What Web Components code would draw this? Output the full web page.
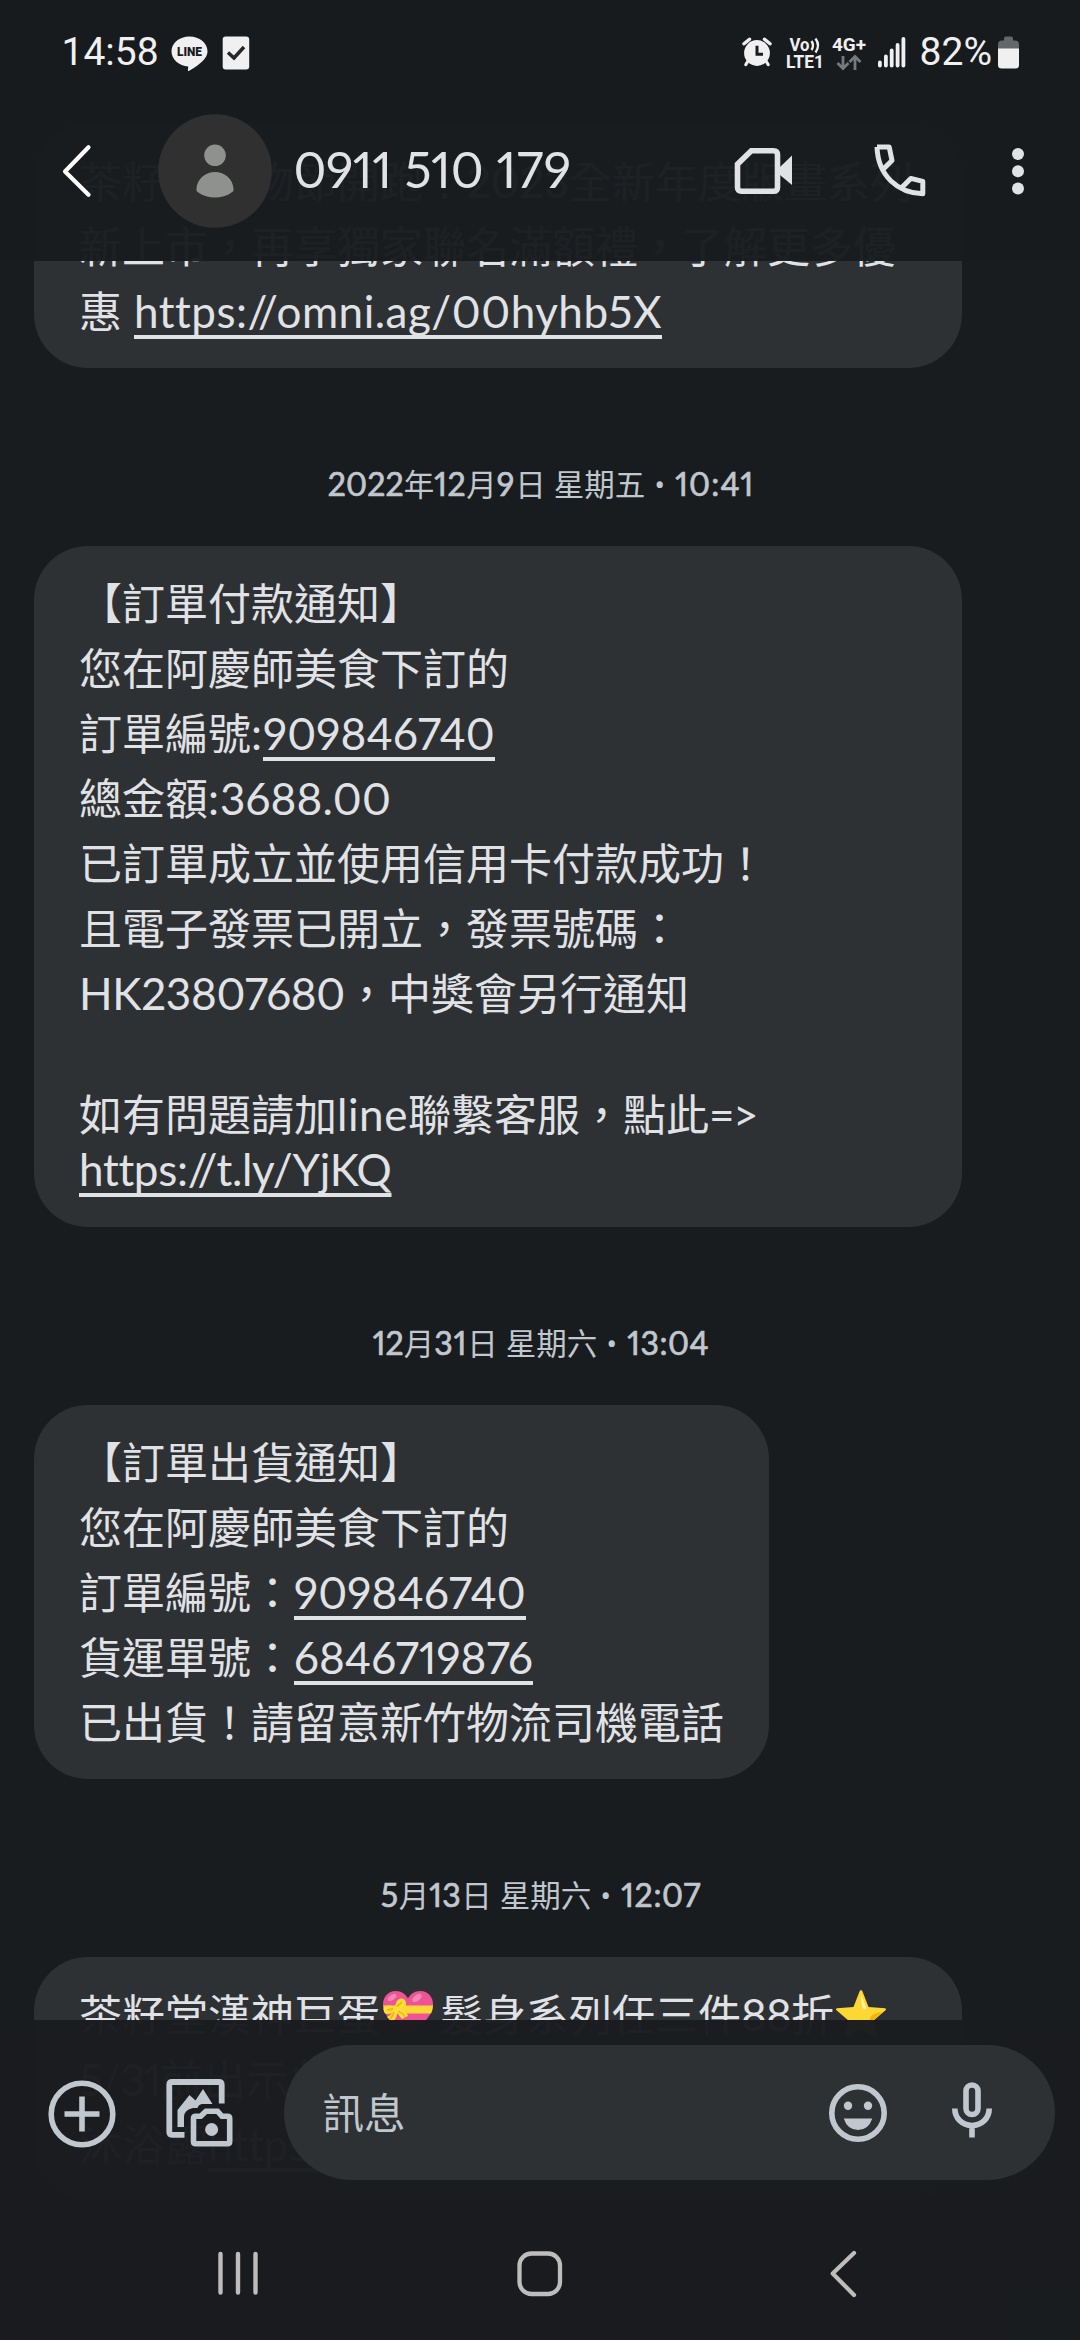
<!DOCTYPE html>
<html lang="zh-Hant">
<head>
<meta charset="utf-8">
<title>0911 510 179</title>
<style>
html,body{margin:0;padding:0;background:#191c1f}
body{width:1080px;height:2340px;overflow:hidden}
</style>
</head>
<body>
<sms-screen>
  <sms-thread slot="thread">
    <sms-bubble>
      <sms-line>茶籽堂購物節開跑！<sms-run w="103">2023</sms-run>全新年度版畫系列</sms-line>
      <sms-line>新上市，再享獨家聯名滿額禮，了解更多優</sms-line>
      <sms-line>惠<sms-gap w="12"></sms-gap><sms-run w="528" link>https://omni.ag/00hyhb5X</sms-run></sms-line>
    </sms-bubble>
    <sms-date><sms-run w="76">2022</sms-run>年<sms-run w="32">12</sms-run>月<sms-run w="18.5">9</sms-run>日<sms-gap w="8"></sms-gap>星期五<sms-gap w="9"></sms-gap><sms-dot></sms-dot><sms-gap w="10"></sms-gap><sms-run w="79">10:41</sms-run></sms-date>
    <sms-bubble>
      <sms-line>【訂單付款通知】</sms-line>
      <sms-line>您在阿慶師美食下訂的</sms-line>
      <sms-line>訂單編號<sms-run w="12">:</sms-run><sms-run w="232" link>909846740</sms-run></sms-line>
      <sms-line>總金額<sms-run w="12">:</sms-run><sms-run w="171">3688.00</sms-run></sms-line>
      <sms-line>已訂單成立並使用信用卡付款成功！</sms-line>
      <sms-line>且電子發票已開立，發票號碼：</sms-line>
      <sms-line><sms-run w="266">HK23807680</sms-run>，中獎會另行通知</sms-line>
      <sms-line latin></sms-line>
      <sms-line>如有問題請加<sms-run w="71">line</sms-run>聯繫客服，點此<sms-run w="48">=&gt;</sms-run></sms-line>
      <sms-line latin><sms-run w="312.5" link>https://t.ly/YjKQ</sms-run></sms-line>
    </sms-bubble>
    <sms-date><sms-run w="31">12</sms-run>月<sms-run w="33">31</sms-run>日<sms-gap w="8"></sms-gap>星期六<sms-gap w="9"></sms-gap><sms-dot></sms-dot><sms-gap w="10"></sms-gap><sms-run w="82">13:04</sms-run></sms-date>
    <sms-bubble compact>
      <sms-line>【訂單出貨通知】</sms-line>
      <sms-line>您在阿慶師美食下訂的</sms-line>
      <sms-line>訂單編號：<sms-run w="232" link>909846740</sms-run></sms-line>
      <sms-line>貨運單號：<sms-run w="239" link>6846719876</sms-run></sms-line>
      <sms-line>已出貨！請留意新竹物流司機電話</sms-line>
    </sms-bubble>
    <sms-date><sms-run w="18">5</sms-run>月<sms-run w="32">13</sms-run>日<sms-gap w="8"></sms-gap>星期六<sms-gap w="9"></sms-gap><sms-dot></sms-dot><sms-gap w="10"></sms-gap><sms-run w="80">12:07</sms-run></sms-date>
    <sms-bubble>
      <sms-line>茶籽堂漢神巨蛋<sms-icon name="heart"></sms-icon>髮身系列任三件<sms-run w="50">88</sms-run>折<sms-icon name="star"></sms-icon></sms-line>
      <sms-line><sms-run w="81">5/31</sms-run>前出示此</sms-line>
      <sms-line>沐浴露<sms-run w="140" link>https://</sms-run></sms-line>
    </sms-bubble>
  </sms-thread>
  <sms-header slot="header"></sms-header>
  <sms-composer slot="footer"></sms-composer>
</sms-screen>

<script>
const ICONS = {
  line: [37, 36, '<path d="M18.5.5C28.500.500 36.500 7 36.500 15.300c0 4.600-3.500 9.200-8.500 13-3.500 2.700-7 5-10.200 6.600-.8.3-1-.1-.9-.8l.4-3.500C8 30 .5 23.500.5 15.300.5 7 8.500.5 18.500.5z" fill="#f0f0f0"/><text x="18.500" y="20" text-anchor="middle" font-family="Roboto" font-weight="900" font-size="12" textLength="25" lengthAdjust="spacingAndGlyphs" fill="#191c1f">LINE</text>'],
  task: [28, 34, '<rect x=".7" y=".5" width="26.500" height="33" rx="3" fill="#f0f0f0"/><path d="M6 16.500l6 5.500 10-11" fill="none" stroke="#25282b" stroke-width="3.500"/>'],
  alarm: [30, 30, '<g fill="none" stroke="#f0f0f0" stroke-linecap="round"><path d="M2 6.800l5.500-4.600M28 6.800l-5.500-4.600" stroke-width="3.400"/><path d="M6 24l-2.200 3.600M24 24l2.200 3.600" stroke-width="3"/></g><circle cx="15" cy="16" r="12.900" fill="#f0f0f0"/><path d="M15 8.800v8.400h6" fill="none" stroke="#191c1f" stroke-width="3"/>'],
  volte: [40, 34, '<g fill="#f0f0f0" font-family="Roboto" font-weight="700" font-size="18"><text x="3.500" y="15" textLength="20" lengthAdjust="spacingAndGlyphs">Vo</text><text x="0" y="32" textLength="38" lengthAdjust="spacingAndGlyphs">LTE1</text></g><path d="M25.500 5q3 4.500 0 9M29.500 2.500q5 7 0 14" fill="none" stroke="#f0f0f0" stroke-width="2.400"/>'],
  data: [34, 34, '<text x="0" y="15" fill="#f0f0f0" font-family="Roboto" font-weight="700" font-size="18" textLength="34" lengthAdjust="spacingAndGlyphs">4G+</text><path d="M11 20v12M5.500 27l5.500 5.500 5.500-5.500M23 34V21M17.500 26l5.500-5.500 5.500 5.500" fill="none" stroke="#77797b" stroke-width="2.800"/>'],
  signal: [28, 31, '<g fill="#f0f0f0"><rect x="0" y="23.500" width="3.800" height="7" rx="1.900"/><rect x="6" y="17.500" width="3.800" height="13" rx="1.900"/><rect x="11.800" y="11.500" width="3.800" height="19" rx="1.900"/><rect x="17.700" y="6" width="3.800" height="24.500" rx="1.900"/><rect x="23.500" y="0" width="3.800" height="30.500" rx="1.900"/></g>'],
  battery: [22, 33, '<path d="M6 4.500V2.500Q6 .5 8 .5h5q2 0 2 2v2h2q4 0 4 4V13H0V8.500q0-4 4-4z" fill="#646668"/><path d="M0 12.500h21V29q0 3.500-3.500 3.500h-14Q0 32.500 0 29z" fill="#f0f0f0"/>'],
  back: [30, 56, '<path d="M26.500 4.300L3 28.500 26.500 51.700" fill="none" stroke="#fff" stroke-width="4.200" stroke-linecap="round" stroke-linejoin="round"/>'],
  avatar: [114, 114, '<circle cx="57" cy="57" r="56.800" fill="#303030"/><circle cx="57" cy="41.300" r="10.800" fill="#8f918f"/><path d="M38.400 75.500C38.800 65 47.500 58 57 58s18.200 7 18.600 17.500q.1 2-1.700 2.700C69 82 63 83.500 57 83.500s-12-1.500-17-5.300q-1.700-.7-1.600-2.700z" fill="#8f918f"/>'],
  video: [58, 48, '<path d="M16.300 3.700H38.500q4 0 4 4V40.300q0 4-4 4H6.500q-4 0-4-4V17.200z" fill="none" stroke="#e1e2e5" stroke-width="5.600"/><path d="M57 8.500V38L45 28V20z" fill="#e1e2e5"/>'],
  call: [52, 53, '<g fill="none" stroke="#e1e2e5" stroke-width="5" stroke-linejoin="round"><path d="M3 3H15.200L18 16.500 9.200 25.200M3 3C4 32 24 49 48.800 49.800V37.400L36.800 34.400 27.800 43.500" /></g>'],
  more: [14, 48, '<g fill="#e1e2e5"><circle cx="7" cy="7" r="6"/><circle cx="7" cy="24.200" r="6"/><circle cx="7" cy="41.400" r="6"/></g>'],
  plus: [68, 68, '<g fill="none" stroke="#c1c7ce" stroke-width="5.600"><circle cx="34" cy="34" r="30.800"/><path d="M34 16.500v35M16.500 34h35"/></g>'],
  gallery: [70, 70, '<path d="M18.500 55.800H6q-2.700 0-2.700-2.700V5.800Q3.300 3 6 3H53q2.700 0 2.700 2.800V24.500" fill="none" stroke="#c1c7ce" stroke-width="5.800"/><path d="M11.500 48V31L23.500 16 29.500 21.500 37 10 46.500 25H36Q32.500 25.500 31.500 29H27Q18 31 18 38V48z" fill="#c1c7ce"/><path d="M27.500 39.500Q27.500 37.300 29.700 37.300h5L40 32.200H51.500L56 37.300H61.500q2.200 0 2.200 2.200V62.500q0 2.200-2.200 2.200H29.700q-2.200 0-2.200-2.200z" fill="none" stroke="#c1c7ce" stroke-width="5.600"/><circle cx="45.600" cy="50.500" r="6.500" fill="#c1c7ce"/>'],
  smile: [58, 58, '<circle cx="29" cy="29" r="26.200" fill="none" stroke="#c1c7ce" stroke-width="5.600"/><g fill="#c1c7ce"><circle cx="19" cy="21.700" r="4.200"/><circle cx="39" cy="21.700" r="4.200"/><path d="M14.700 34.500H43.300Q39.500 46 29 46T14.700 34.500z"/></g>'],
  mic: [40, 56, '<g fill="none" stroke="#c1c7ce" stroke-width="5.600"><rect x="14" y="3" width="12" height="29.500" rx="6"/><path d="M2.800 26.500c0 9.500 7.200 17 17.200 17s17.200-7.500 17.200-17M20 43v12.500"/></g>'],
  recents: [40, 46, '<path d="M2.500 3v38.500M20 3v38.500M37.500 3v38.500" stroke="#bfbdbc" stroke-width="4.400" stroke-linecap="round"/>'],
  home: [46, 46, '<rect x="2.500" y="2.500" width="40.500" height="40.500" rx="12" fill="none" stroke="#bfbdbc" stroke-width="4.300"/>'],
  navback: [28, 48, '<path d="M24 3L2.700 23.500 24 45" fill="none" stroke="#bfbdbc" stroke-width="4.200" stroke-linecap="round" stroke-linejoin="round"/>'],
  heart: [60, 48, '<path d="M28 46C16 36 3 27 3 14.500 3 6.500 8.500 1 15.500 1 21.500 1 26 4.500 28 8.500 30 4.500 34.500 1 40.500 1 47.500 1 53 6.500 53 14.500 53 27 40 36 28 46z" fill="#ee5396"/><ellipse cx="12" cy="7.500" rx="5" ry="2.500" fill="#f985b8" transform="rotate(-38 12 7.500)"/><ellipse cx="37" cy="8" rx="5.500" ry="3" fill="#f985b8" transform="rotate(-38 37 8)"/><path d="M3.300 15.500H53Q52.800 20 51 23.500H5Q3.500 20 3.300 15.500z" fill="#fdd835"/><path d="M15 17Q16 9 21 8.500 26 8.500 26 14 25.500 19 19 20 27 21 28 26L22 29 17 23Q17 29 12 32L7 27Q11 25 13 22 7 26 4 22 2 16 8 15.500 12 15 15 17z" fill="#ffdf32"/><path d="M17 16.500L22 12M13 19L7 20M18 21.500Q23 23 25 27M14 22Q13 26 10 29" fill="none" stroke="#f9b21d" stroke-width="1.800"/>'],
  star: [52, 48, '<path d="M26 0q1 0 1.500 1.500L33.500 17 50 18.300q1.800.6.500 2L38 31 42 46q.2 2-1.500 1.300L26 39 11.500 47.300Q9.800 48 10 46L14 31 1.500 20.300q-1.300-1.400.5-2L18.500 17 24.500 1.500Q25 0 26 0z" fill="#fdd835"/><path d="M26 4l4.500 12q1.500 4-1.500 3-3-1-3-15z" fill="#fff59d"/><path d="M47 22q-10 1-12 6-1 3 3 2z" fill="#f4b400"/>']
};

function define(name, html, init) {
  const tpl = document.createElement('template');
  tpl.innerHTML = html;
  customElements.define(name, class extends HTMLElement {
    connectedCallback() {
      if (this.shadowRoot) return;
      this.attachShadow({ mode: 'open' }).append(tpl.content.cloneNode(true));
      if (init) init.call(this, this.shadowRoot);
    }
  });
}

define('sms-icon', '<style>:host{display:inline-block;flex:none;line-height:0}svg{display:block;overflow:visible}:host([name=heart]),:host([name=star]){vertical-align:-7px;margin-top:-20px}:host([name=star]){margin-left:1px}</style>', function (root) {
  const [w, h, body] = ICONS[this.getAttribute('name')];
  root.innerHTML += `<svg width="${w}" height="${h}" viewBox="0 0 ${w} ${h}">${body}</svg>`;
});

define('sms-gap', '<style>:host{display:inline-block}</style>', function () {
  this.style.width = this.getAttribute('w') + 'px';
});

define('sms-dot', '<style>:host{display:inline-block;width:11px;line-height:0;font-family:Roboto,sans-serif;font-size:31px}</style>•');

define('sms-screen', `<style>
  :host{display:grid;grid-template:2340px/1080px;background:#191c1f;overflow:hidden;color:#e1e2e5}
  .layer{grid-area:1/1;min-height:0}
  .chrome{display:flex;flex-direction:column;justify-content:space-between}
</style><div class="layer"><slot name="thread"></slot></div><div class="layer chrome"><slot name="header"></slot><slot name="footer"></slot></div>`);

define('sms-thread', `<style>
  :host{display:flex;flex-direction:column;align-items:flex-start;padding:124px 34px 0;height:2100px;overflow:hidden}
</style><slot></slot>`);

define('sms-bubble', `<style>
  :host{display:flex;flex-direction:column;flex:none;box-sizing:border-box;width:928px;padding:23px 45px 26px;border-radius:54px;background:#2d3134}
  :host([compact]){width:735px}
</style><slot></slot>`);

define('sms-line', `<style>
  :host{display:block;height:65px;font:43px/65px "Noto Sans CJK TC",sans-serif;white-space:nowrap;--run-size:44px}
  :host([latin]){height:56px;font:43px/50px "Lato","Noto Sans CJK TC",sans-serif}
</style><slot></slot>`);

define('sms-date', `<style>
  :host{display:block;flex:none;box-sizing:border-box;width:1014px;height:178px;padding-top:93px;text-align:center;font:30.5px/44px "Noto Sans CJK TC",sans-serif;color:#c1c7ce;white-space:nowrap;--run-stroke:.7px;--run-size:32px}
</style><slot></slot>`);

/* A Latin or digit run whose tracking is set so that it takes a given advance width. */
define('sms-run', `<style>
  :host{display:inline-block;line-height:0;font-family:"Lato",sans-serif;font-size:var(--run-size,inherit);font-feature-settings:"pnum";font-variant-ligatures:none;-webkit-text-stroke:var(--run-stroke,0) currentColor;white-space:nowrap}
  :host([link]) span{text-decoration:underline;text-decoration-thickness:4px;text-underline-offset:6.500px;text-decoration-skip-ink:none}
</style><span><slot></slot></span>`, function () {
  const w = +this.getAttribute('w');
  const natural = this.getBoundingClientRect().width;
  this.style.letterSpacing = (w - natural) / this.textContent.length + 'px';
  this.style.width = w + 'px';
});

define('sms-header', `<style>
  :host{display:block;height:261px;background:rgba(25,28,31,.975)}
  .status{display:flex;align-items:flex-start;height:113px;box-sizing:border-box;padding:35.500px 60px 0 61.500px;font:39px/39px Roboto,sans-serif;color:#f0f0f0}
  .status span{margin-top:-3px}
  .grow{flex:1}
  .bar{display:flex;align-items:center;height:115px;padding-left:62px}
  .title{font:50px/60px "Lato",sans-serif;margin:-4px 0 0 22px;width:300px;white-space:nowrap}
</style>
<div class="status">
  <span>14:58</span>
  <sms-icon name="line" style="margin-left:12px"></sms-icon>
  <sms-icon name="task" style="margin-left:14.500px"></sms-icon>
  <div class="grow"></div>
  <sms-icon name="alarm" style="margin:1.500px 14px 0 0"></sms-icon>
  <sms-icon name="volte" style="margin-right:6px"></sms-icon>
  <sms-icon name="data" style="margin-right:12px"></sms-icon>
  <sms-icon name="signal" style="margin:1px 14px 0 0"></sms-icon>
  <span>82%</span>
  <sms-icon name="battery" style="margin-left:6px"></sms-icon>
</div>
<div class="bar">
  <sms-icon name="back"></sms-icon>
  <sms-icon name="avatar" style="margin-left:65.500px"></sms-icon>
  <div class="title"><sms-run w="98">0911</sms-run><sms-gap w="13"></sms-gap><sms-run w="79">510</sms-run><sms-gap w="13"></sms-gap><sms-run w="75">179</sms-run></div>
  <sms-icon name="video" style="margin-left:141px"></sms-icon>
  <sms-icon name="call" style="margin-left:81px"></sms-icon>
  <sms-icon name="more" style="margin-left:85px"></sms-icon>
</div>`);

define('sms-composer', `<style>
  :host{display:block;height:320px;background:rgba(25,28,31,.982)}
  .row{display:flex;align-items:center;padding:25px 25px 0 47.500px;height:135px}
  .field{display:flex;align-items:center;box-sizing:border-box;flex:1;height:135px;margin-left:48px;padding:0 63px 0 39px;border-radius:68px;background:#2d3134;color:#c1c7ce;font:41.500px/60px "Noto Sans CJK TC",sans-serif}
  .field span{margin-top:-3px}
  .grow{flex:1}
  .nav{display:flex;align-items:center;height:45px;padding:71.500px 222.500px 0 218px;justify-content:space-between}
</style>
<div class="row">
  <sms-icon name="plus" style="margin-top:3px"></sms-icon>
  <sms-icon name="gallery" style="margin:3px 0 0 50px"></sms-icon>
  <div class="field"><span>訊息</span><div class="grow"></div><sms-icon name="smile"></sms-icon><sms-icon name="mic" style="margin:-5px 0 0 65px"></sms-icon></div>
</div>
<div class="nav"><sms-icon name="recents"></sms-icon><sms-icon name="home" style="margin-left:-7px"></sms-icon><sms-icon name="navback"></sms-icon></div>`);
</script>
</body>
</html>
